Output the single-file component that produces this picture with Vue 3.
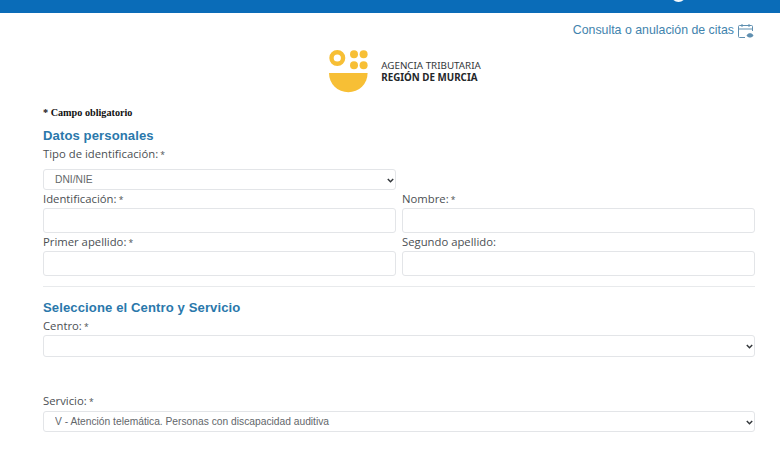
<script setup>
const fila1 = [
  { label: 'Identificación:', req: true },
  { label: 'Nombre:', req: true },
]
const fila2 = [
  { label: 'Primer apellido:', req: true },
  { label: 'Segundo apellido:', req: false },
]
</script>

<template>
  <div class="page">
    <header class="topbar">
      <span class="topbar-mark"></span>
    </header>
    <main class="content">
      <div class="citas">
        <a class="citas-link">Consulta o anulación de citas</a>
        <svg class="citas-icon" width="18" height="16" viewBox="0 0 18 16" fill="none" stroke="#5f8fb0" stroke-width="1">
          <path d="M8 14.5H2.5a1 1 0 0 1-1-1V3.5a1 1 0 0 1 1-1h12a1 1 0 0 1 1 1V8" />
          <path d="M1.5 6h14M5 1v3M12 1v3" />
          <path d="M9.5 12.5c1-1.6 2.2-2.2 3.5-2.2s2.6.6 3.5 2.2c-.9 1.4-2.2 2-3.5 2s-2.6-.6-3.5-2z" fill="#5f8fb0" stroke="none" />
        </svg>
      </div>

      <div class="logo">
        <svg width="40" height="43" viewBox="0 0 40 43">
          <circle cx="8.3" cy="8" r="5.8" fill="none" stroke="#f7bf35" stroke-width="4.4" />
          <circle cx="25" cy="4.3" r="4" fill="#f7bf35" />
          <circle cx="34.6" cy="4.3" r="4" fill="#f7bf35" />
          <circle cx="25" cy="15.3" r="4" fill="#f7bf35" />
          <circle cx="34.6" cy="15.3" r="4" fill="#f7bf35" />
          <path d="M0 23h38.6a19.3 19.3 0 0 1-38.6 0z" fill="#f7bf35" />
        </svg>
        <div class="logo-text">
          <span class="logo-top">AGENCIA TRIBUTARIA</span>
          <span class="logo-bottom">REGIÓN DE MURCIA</span>
        </div>
      </div>

      <p class="required">* Campo obligatorio</p>

      <h2 class="section-title">Datos personales</h2>
      <label class="field-label">Tipo de identificación:<span class="star"> *</span></label>
      <div class="half tipo select-wrap">
        <select class="control select-sm">
          <option>DNI/NIE</option>
        </select>
        <svg class="chevron" width="7" height="5" viewBox="0 0 7 5"><path d="M.8 1l2.7 2.7L6.2 1" fill="none" stroke="#33373b" stroke-width="1.5" /></svg>
      </div>

      <div class="grid">
        <div v-for="f in fila1" :key="f.label" class="field">
          <label class="field-label">{{ f.label }}<span v-if="f.req" class="star"> *</span></label>
          <input class="control input" type="text" />
        </div>
      </div>
      <div class="grid">
        <div v-for="f in fila2" :key="f.label" class="field">
          <label class="field-label">{{ f.label }}<span v-if="f.req" class="star"> *</span></label>
          <input class="control input" type="text" />
        </div>
      </div>

      <hr class="divider" />

      <h2 class="section-title">Seleccione el Centro y Servicio</h2>
      <label class="field-label centro">Centro:<span class="star"> *</span></label>
      <div class="select-wrap">
        <select class="control select-lg">
          <option></option>
        </select>
        <svg class="chevron" width="7" height="5" viewBox="0 0 7 5"><path d="M.8 1l2.7 2.7L6.2 1" fill="none" stroke="#33373b" stroke-width="1.5" /></svg>
      </div>

      <label class="field-label servicio">Servicio:<span class="star"> *</span></label>
      <div class="select-wrap">
        <select class="control select-sm">
          <option>V - Atención telemática. Personas con discapacidad auditiva</option>
        </select>
        <svg class="chevron" width="7" height="5" viewBox="0 0 7 5"><path d="M.8 1l2.7 2.7L6.2 1" fill="none" stroke="#33373b" stroke-width="1.5" /></svg>
      </div>
    </main>
  </div>
</template>

<style scoped>
.page {
  width: 780px;
  height: 470px;
  overflow: hidden;
  background: #fff;
}
.topbar {
  height: 13px;
  background: #0a6cb8;
  position: relative;
}
.topbar-mark {
  position: absolute;
  left: 671px;
  top: -8px;
  width: 15px;
  height: 10px;
  border-radius: 0 0 8px 8px;
  background: #f4f8fb;
}
.content {
  padding: 0 25px 0 43px;
}
.citas {
  display: flex;
  justify-content: flex-end;
  align-items: center;
  gap: 3px;
  height: 32px;
  box-sizing: border-box;
}
.citas-link {
  margin-top: 2px;
  font: 12.35px/16px "Liberation Sans", Arial, sans-serif;
  color: #3f83ad;
}
.citas-icon {
  margin-top: 4px;
}
.logo {
  display: flex;
  justify-content: center;
  align-items: flex-start;
  gap: 12px;
  height: 43px;
  margin-top: 5px;
  margin-left: -13px;
  margin-right: -25px;
}
.logo svg {
  overflow: visible;
}
.logo-text {
  display: flex;
  flex-direction: column;
  padding-top: 10px;
  font-family: "Noto Sans", Roboto, sans-serif;
  font-size: 9.8px;
  line-height: 12px;
  color: #33373a;
}
.logo-bottom {
  font-weight: 700;
  color: #24272a;
}
.required {
  margin: 14px 0 0;
  font: 700 10.2px/12px "Liberation Serif", "Times New Roman", serif;
  color: #111;
}
.section-title {
  margin: 9px 0 3px;
  font: 700 13.1px/15px "Liberation Sans", Arial, sans-serif;
  color: #2a78ab;
  letter-spacing: 0.1px;
}
.field-label {
  display: block;
  font: 400 11.3px/16px "Open Sans", "Noto Sans", sans-serif;
  color: #4b4f53;
}
.star {
  font-size: 8.5px;
  line-height: 0;
}
.half {
  width: 353px;
}
.tipo {
  margin-top: 7px;
}
.grid {
  display: grid;
  grid-template-columns: 353px 353px;
  column-gap: 6px;
  margin-top: 1px;
}
.field {
  display: flex;
  flex-direction: column;
}
.field .field-label {
  margin-bottom: 1px;
}
.select-wrap {
  position: relative;
}
.chevron {
  position: absolute;
  right: 2px;
  top: 50%;
  margin-top: -2px;
  pointer-events: none;
}
.control {
  display: block;
  width: 100%;
  box-sizing: border-box;
  background: #fff;
  border: 1px solid #e3e5e8;
  border-radius: 3px;
  color: #63676b;
  font: 400 10.25px "Liberation Sans", Arial, sans-serif;
  outline: none;
  appearance: none;
}
.input {
  height: 25px;
}
.select-sm {
  height: 21px;
  padding: 0 0 0 11px;
}
.select-lg {
  height: 22px;
  padding: 0 0 0 11px;
}
.divider {
  margin: 10px 0 0;
  border: 0;
  border-top: 1px solid #e8eaec;
}
.divider + .section-title {
  margin-top: 13px;
}
.centro {
  margin-top: 1px;
  margin-bottom: 1px;
}
.servicio {
  margin-top: 36px;
  margin-bottom: 2px;
}
</style>

<style>
html, body {
  margin: 0;
  background: #fff;
}
</style>
